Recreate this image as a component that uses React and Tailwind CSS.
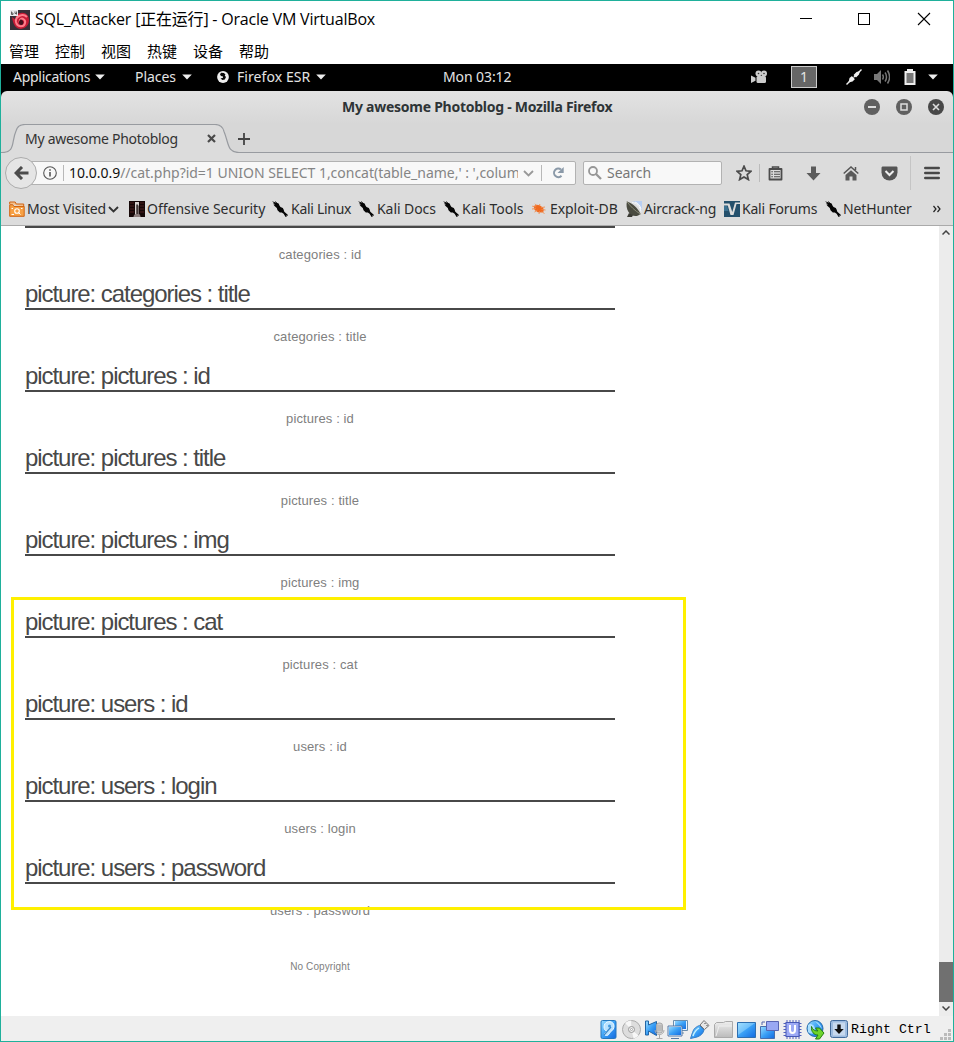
import React from "react";

const UI = "font-['Noto_Sans'] whitespace-nowrap";

function Caret({ className = "" }) {
  return <svg className={"shrink-0 " + className} width="10" height="6" viewBox="0 0 10 6"><path d="M0.2 0.5h9.6L5 5.5z" fill="#eee" /></svg>;
}

function KaliLogo() {
  return (
    <svg width="16" height="16" viewBox="0 0 16 16" fill="#050505">
      <path d="M0 .3l3 1 1.6.4 2 .8 1 2.3.9 1.3 2.3.8.8 1.6.7 2.2 3.7 3.3-.4.7-1.6-.3.8 1.4-1.2.2-2-3.3-1.8-1.2-2-.1L5.5 9.3 4.8 7 2.8 5.3 1.3 3.6 3 4 .8 2l1.7.4z" />
      <path d="M3.3.3l2 2.2" stroke="#050505" strokeWidth=".7" />
    </svg>
  );
}

function FolderLogo() {
  return (
    <svg width="16" height="16" viewBox="0 0 16 16">
      <path d="M.7 3V1h5.500l1 2h7.500v2.500" fill="#f3c08d" stroke="#d06414" />
      <path d="M.7 3.700h3L5 5.500h10.200v9.800H.7z" fill="#f7a145" stroke="#d06414" />
      <circle cx="8" cy="10" r="2.300" fill="none" stroke="#fff" strokeWidth="1.100" />
      <path d="M9.700 11.700l1.800 1.800M2.500 13.500h2.500M2.500 7.500h1.500M12 7.500h1.500" stroke="#fff" />
    </svg>
  );
}

function OffsecLogo() {
  return (
    <svg width="16" height="16" viewBox="0 0 16 16">
      <path fill="#160808" d="M0 0h16v16H0z" />
      <path d="M1 2h4M1 5h4M1 8h4M1 11h4M11 2h4M11 5h4M11 8h4M11 11h4" stroke="#4c1e1e" />
      <path d="M6 1h4v3.500H9.500V15H6z" fill="#d8d2d0" /><path d="M7.400 3.500h1.400V15H7.400z" fill="#1c1010" />
      <path d="M4.500 16c0-1.500.6-2.500 2-3h3.500c1 .5 1.500 1.500 1.500 3z" fill="#8d7f7f" />
    </svg>
  );
}

function BugLogo() {
  return (
    <svg width="16" height="16" viewBox="0 0 16 16">
      <path d="M2.700 5l3-1.300 3 .5 3.500 2.600.6 3.500-2 1.200-4-.3L3.600 9z" fill="#f06a20" />
      <path d="M1.200 5.200l4 .7M4 2.800l2 2M9 3l-1 2M14 6l-4 .6M14.500 9l-4-.5M13.500 12.500l-3-2M8 13l.5-3M3.500 11l3-2M1 8l4-.5" stroke="#f08a4b" strokeWidth=".9" />
    </svg>
  );
}

function AircrackLogo() {
  return (
    <svg width="16" height="16" viewBox="0 0 16 16">
      <path d="M5 0c6 0 11 5 11 12V0z" fill="#b9cff2" />
      <path d="M6 1.500c5 .5 8 4 9 9M9 1c3 1 5.500 4 6 7" fill="none" stroke="#f4f8ff" />
      <path d="M1 .5C6 2 12 7 14.500 13c-3 3-9 3-12-2C.5 8 0 3.500 1 .5z" fill="#4a4b40" />
      <path d="M1 .5C4 5 9 10 14.500 13" stroke="#8a8b78" fill="none" />
      <path d="M3 12l-2 4h5l1-2z" fill="#3a3a33" />
    </svg>
  );
}

function ForumLogo() {
  return (
    <svg width="16" height="16" viewBox="0 0 16 16">
      <path fill="#24506c" d="M0 0h16v16H0z" />
      <path d="M0 2.500h5.500L8.300 11 11 1.500h5V3h-3.500L9.500 14H6.500L3.800 4.500H0z" fill="#dcdcdc" />
      <path d="M0 5h3l1.500 5H0z" fill="#3b7191" />
    </svg>
  );
}

const bookmarks = [
  { w: "w-[120px]", icon: <FolderLogo />, name: "Most Visited", track: "tracking-[-0.12px]", gap: "ml-[2px]", menu: true },
  { w: "w-[143px]", icon: <OffsecLogo />, name: "Offensive Security", track: "tracking-[-0.02px]", gap: "ml-[2px]" },
  { w: "w-[86px]", icon: <KaliLogo />, name: "Kali Linux", track: "tracking-[-0.29px]", gap: "ml-[3px]" },
  { w: "w-[85px]", icon: <KaliLogo />, name: "Kali Docs", track: "tracking-[-0.07px]", gap: "ml-[3px]" },
  { w: "w-[88px]", icon: <KaliLogo />, name: "Kali Tools", track: "tracking-[0.01px]", gap: "ml-[3px]" },
  { w: "w-[95px]", icon: <BugLogo />, name: "Exploit-DB", track: "tracking-[-0.07px]", gap: "ml-[3px]" },
  { w: "w-[98px]", icon: <AircrackLogo />, name: "Aircrack-ng", track: "tracking-[-0.18px]", gap: "ml-[2px]" },
  { w: "w-[101px]", icon: <ForumLogo />, name: "Kali Forums", track: "tracking-[-0.2px]", gap: "ml-[2px]" },
  { w: "w-[107px]", icon: <KaliLogo />, name: "NetHunter", track: "tracking-[-0.14px]", gap: "ml-[2px]" },
];

const pictures = [
  "categories : title", "pictures : id", "pictures : title", "pictures : img",
  "pictures : cat", "users : id", "users : login", "users : password",
];

function Caption({ children }) {
  return <p className="flex h-[58px] w-[590px] items-start justify-center pt-[18px] text-[13px] leading-[18px] tracking-[0.11px] text-[#808080]">{children}</p>;
}

function HostTitle() {
  return (
    <div className="flex h-[39px] shrink-0 items-center bg-white pl-[9px] text-black">
      <svg className="mt-[-2px]" width="20" height="20" viewBox="0 0 20 20">
        <path fill="#382f38" d="M0 0h20v20H0z" />
        <path d="M2 7c1 8 4 12 9 12 5-1 8-4 8-9s-4-8-8-7c-4 0-6 3-5 7" fill="#c51b36" />
        <path d="M17 7c-4-4-12-1-11 5 1 5 8 6 9 1 1-3-3-6-5-3-1 2 0 4 2 3" fill="none" stroke="#ff7d8b" strokeWidth="2" />
        <path d="M10 10c-2 2-1 5 1 5s3-2 2-4c-1-1-2-2-3-1z" fill="#44101e" />
        <path fill="#e9e9ec" d="M0 0h8v6H0z" /><path d="M1.500 1.500v3h1.500v-1.500h-1.500M5 1.500v2h1.500M6.500 1.500v3" stroke="#444" strokeWidth=".8" fill="none" />
      </svg>
      <span className="ml-[5px] mt-[-3px] w-[762px] whitespace-nowrap font-['Open_Sans','Noto_Sans_CJK_SC',sans-serif] text-[16px] tracking-[-0.2px]">SQL_Attacker [正在运行] - Oracle VM VirtualBox</span>
      <svg className="mt-[-4px]" width="150" height="14" viewBox="0 0 150 14" fill="none" stroke="#000" shapeRendering="crispEdges">
        <path d="M3 6.500h12" /><path d="M61.500 1.500h11v11h-11z" /><path d="M121 1l12 12M133 1l-12 12" shapeRendering="auto" strokeWidth="1.100" />
      </svg>
    </div>
  );
}

function GnomeBar() {
  return (
    <div className={UI + " flex h-[28px] shrink-0 items-center bg-black pb-[2px] text-[14px] text-[#e4e4e4]"}>
      <div className="ml-[12px] flex w-[122px] items-center"><span className="mt-[-2px] w-[78px] tracking-[-0.28px]">Applications</span><Caret className="ml-[4px]" /></div>
      <div className="flex w-[82px] items-center"><span className="mt-[-2px] w-[42px] tracking-[-0.05px]">Places</span><Caret className="ml-[5px]" /></div>
      <div className="flex w-[226px] items-center">
        <svg width="12" height="12" viewBox="0 0 12 12"><circle cx="6" cy="6" r="5.900" fill="#eee" /><path d="M4 1.800l3 .2 1.500 1.800-.8.700L9 6 7.800 8.500 5.500 9 3.500 7.500l2.500-.7V5.500L4 5 3 3.500z" fill="#080808" /></svg>
        <span className="ml-[8px] mt-[-2px] w-[75px] tracking-[0.08px]">Firefox ESR</span><Caret className="ml-[4px]" />
      </div>
      <span className="mt-[-2px] w-[308px] tracking-[-0.1px]">Mon 03:12</span>
      <svg width="16" height="14" viewBox="0 0 16 14" fill="#ccc"><circle cx="7.500" cy="3.500" r="3" /><circle cx="13" cy="3.500" r="3" /><rect x="5.500" y="6" width="9.500" height="7" rx="1.500" /><path d="M0 5.500l4.500 2.200v3L0 13z" /><circle cx="7.500" cy="3.500" r=".8" fill="#333" /><circle cx="13" cy="3.500" r=".8" fill="#333" /></svg>
      <span className="ml-[24px] flex h-[22px] w-[26px] items-center justify-center border border-[#ccc] bg-[#666] pb-[2px]">1</span>
      <svg className="ml-[29px]" width="16" height="16" viewBox="0 0 16 16"><path d="M.5 15.500L15.500.5" stroke="#eee" strokeWidth="1.400" /><path d="M2.500 13.500l1-4.500 2.500-2 3 3-2.500 2.500zM7.500 6l3-3 3.500-1-1 3.500-3 3z" fill="#eee" /><path d="M5.500 6l4.500 4.500" stroke="#000" strokeWidth=".8" /></svg>
      <svg className="ml-[12px]" width="16" height="16" viewBox="0 0 16 16" fill="none"><path d="M0 5h3l4-4v14l-4-4H0z" fill="#777" /><path d="M8.500 5.500c1 1.500 1 3.500 0 5M11 3.500c2 2.500 2 6.500 0 9M13.500 1.500c2.600 4 2.600 9 0 13" stroke="#777" strokeWidth="1.500" /></svg>
      <svg className="ml-[14px]" width="12" height="16" viewBox="0 0 12 16"><path d="M3 0h6v2h2.500v14H.5V2H3z" fill="#eee" /><path d="M2.500 4h7v10h-7z" fill="#777" /></svg>
      <Caret className="ml-[12px]" />
    </div>
  );
}

function FirefoxTitle() {
  const disc = "mt-[-1px] flex size-[16px] items-center justify-center rounded-full";
  return (
    <div className={UI + " flex h-[33px] shrink-0 items-center rounded-t-[6px] bg-linear-to-b from-[#e3e3e3] to-[#d7d7d7] text-[14px] font-bold text-[#2e3436]"}>
      <span className="ml-[341px] mt-[-3px] w-[522px] tracking-[-0.26px]">My awesome Photoblog - Mozilla Firefox</span>
      <span className={disc + " bg-[#606060]"}><svg width="16" height="16"><path d="M4 8h8" stroke="#ddd" strokeWidth="2" /></svg></span>
      <span className={disc + " ml-[16px] bg-[#606060]"}><svg width="16" height="16"><path d="M5 5h6v6H5z" fill="none" stroke="#ddd" strokeWidth="1.500" /></svg></span>
      <span className={disc + " ml-[16px] bg-[#484848]"}><svg width="16" height="16"><path d="M5 5l6 6M11 5l-6 6" stroke="#ddd" strokeWidth="1.600" /></svg></span>
    </div>
  );
}

function Tabs() {
  return (
    <div className={UI + " relative flex h-[29px] shrink-0 items-center bg-[#d7d7d7] text-[14px] text-[#333]"}>
      <svg className="absolute left-0 top-0" width="952" height="29" viewBox="0 0 952 29">
        <path d="M0 28.500C15 29 10 18 15 7c1-4 4-7 9-7h190c5 0 8 3 9 7 5 12 3 21.500 15 21.500h714V29H0z" fill="#dcdcdc" />
        <path d="M0 28.500C15 29 10 18 15 7c1-4 4-6.500 9-6.500h190c5 0 8 3 9 7 5 12 3 21 15 21h714" fill="none" stroke="#989ba0" strokeWidth="1.200" />
      </svg>
      <span className="relative ml-[24px] w-[182px] tracking-[-0.28px]">My awesome Photoblog</span>
      <svg className="relative" width="9" height="9" viewBox="0 0 9 9"><path d="M1 1l7 7M8 1L1 8" stroke="#4a4a4a" strokeWidth="2.200" /></svg>
      <svg className="relative ml-[21px]" width="14" height="14"><path d="M1 7h12M7 1v12" stroke="#444" strokeWidth="1.800" /></svg>
    </div>
  );
}

function NavBar() {
  return (
    <div className={UI + " flex h-[40px] shrink-0 items-center bg-[#dcdcdc] text-[14px]"}>
      <div className="z-10 ml-[4px] flex size-[32px] shrink-0 items-center justify-center rounded-full border border-[#acacac] bg-[#e5e5e5]">
        <svg width="15" height="14" viewBox="0 0 15 14"><path d="M8 1L2 7l6 6M2 7h12.500" fill="none" stroke="#4c4c4c" strokeWidth="3" /></svg>
      </div>
      <div className="ml-[-7px] flex h-[24px] w-[546px] shrink-0 items-center rounded-r-[2px] border border-[#b2b2b2] bg-[#f8f8f8] pl-[12px] text-[#858585]">
        <svg className="shrink-0" width="14" height="14" viewBox="0 0 14 14" fill="none" stroke="#555"><circle cx="7" cy="7" r="6.300" strokeWidth="1.100" /><path d="M7 6v4.500M7 3.200v1.500" strokeWidth="1.600" /></svg>
        <span className="ml-[6px] h-[16px] w-px bg-[#b8b8b8]" />
        <span className="ml-[5px] mt-[-2px] w-[449px] shrink-0 overflow-hidden tracking-[-0.02px]"><span className="text-[#111]">10.0.0.9</span>//cat.php?id=1 UNION SELECT 1,concat(table_name,' : ',colum</span>
        <svg className="ml-[5px] shrink-0" width="11" height="7"><path d="M1 1l4.500 4.500L10 1" stroke="#999" strokeWidth="1.800" fill="none" /></svg>
        <span className="ml-[7px] h-[16px] w-px bg-[#b8b8b8]" />
        <svg className="ml-[10px] shrink-0" width="12" height="12" viewBox="0 0 12 12"><path d="M9.500 8.800a4.300 4.300 0 1 1-.5-6.300" stroke="#8a99a8" strokeWidth="2" fill="none" /><path d="M11.700 0v6H5.500z" fill="#8a99a8" /></svg>
      </div>
      <div className="ml-[7px] flex h-[24px] w-[139px] shrink-0 items-center rounded-[2px] border border-[#b2b2b2] bg-[#f8f8f8] pl-[4px] text-[#777]">
        <svg width="14" height="14" viewBox="0 0 14 14"><circle cx="5" cy="5" r="4" stroke="#979797" strokeWidth="1.800" fill="none" /><path d="M8 8l5 5" stroke="#979797" strokeWidth="2.300" /></svg>
        <span className="ml-[5px] mt-[-2px] tracking-[-0.05px]">Search</span>
      </div>
      <svg className="ml-[14px] shrink-0" width="16" height="16" viewBox="0 0 16 16"><path d="M8 1.200l2 4.600 5 .5-3.800 3.300 1.200 5L8 12l-4.400 2.600 1.200-5L1 6.300l5-.5z" fill="none" stroke="#4c4c4c" strokeWidth="1.700" /></svg>
      <span className="ml-[7px] h-[18px] w-px bg-[#bbb]" />
      <svg className="ml-[8px] shrink-0" width="15" height="15" viewBox="0 0 15 15"><path d="M1.500 3h12v10.500h-12z" fill="none" stroke="#4c4c4c" strokeWidth="1.800" strokeLinejoin="round" /><path d="M4.500 3V1h6v2" fill="none" stroke="#4c4c4c" strokeWidth="1.500" /><path d="M3.300 5.700h1.600M6 5.700h6M3.300 8.200h1.600M6 8.200h6M3.300 10.700h1.600M6 10.700h6" stroke="#4c4c4c" strokeWidth="1.100" /></svg>
      <svg className="ml-[23px] shrink-0" width="15" height="15"><path d="M5 .5h5v6.500h4.500l-7 7.500-7-7.500H5z" fill="#5b5b5b" /></svg>
      <svg className="ml-[22px] shrink-0" width="16" height="15" viewBox="0 0 16 15"><path d="M.7 7.500L8 1l7.300 6.500M12.500 1v3" fill="none" stroke="#555" strokeWidth="1.500" /><path d="M2.500 9L8 4.200 13.500 9v5.500H9.500v-4h-3v4h-4z" fill="#5b5b5b" /></svg>
      <svg className="ml-[22px] shrink-0" width="17" height="15" viewBox="0 0 17 15"><path d="M2 .5h13c1 0 1.500.5 1.500 1.500v4.500a8 8 0 0 1-16 0V2C.5 1 1 .5 2 .5z" fill="#555" /><path d="M4.500 5l4 4 4-4" stroke="#eee" strokeWidth="2" fill="none" /></svg>
      <span className="ml-[12px] h-[34px] w-px bg-[#c5c5c5]" />
      <svg className="ml-[13px] shrink-0" width="16" height="14"><path d="M1.300 2h13.400M1.300 7h13.400M1.300 12h13.400" stroke="#484848" strokeWidth="2.600" strokeLinecap="round" /></svg>
    </div>
  );
}

function Bookmarks() {
  return (
    <div className={UI + " flex h-[33px] shrink-0 items-center border-b border-[#aaa] bg-[#dcdcdc] pl-[8px] text-[14px] text-[#2d2d2d]"}>
      {bookmarks.map((b) => (
        <div key={b.name} className={"flex shrink-0 items-center " + b.w}>
          {b.icon}<span className={"mt-[-2px] " + b.gap + " " + b.track}>{b.name}</span>
          {b.menu && <svg className="ml-[2px] shrink-0" width="11" height="7"><path d="M1 1l4.500 4.500L10 1" stroke="#333" strokeWidth="1.900" fill="none" /></svg>}
        </div>
      ))}
      <svg className="ml-px" width="8" height="8"><path d="M.5 1L3 4 .5 7M4.500 1L7 4 4.500 7" stroke="#222" strokeWidth="1.200" fill="none" /></svg>
    </div>
  );
}

function Page() {
  return (
    <div className="relative flex h-[790px] shrink-0 bg-white font-['Liberation_Sans',Arial,sans-serif]">
      <main className="w-[938px] pl-[24px]">
        <div className="h-[2px] w-[590px] bg-[#484848]" />
        <Caption>categories : id</Caption>
        {pictures.map((p) => (
          <section key={p}>
            <h2 className="h-[24px] w-[590px] whitespace-nowrap border-b-2 border-[#484848] text-[24px] leading-[16px] tracking-[-1.06px] text-[#484848]">picture: {p}</h2>
            <Caption>{p}</Caption>
          </section>
        ))}
        <p className="w-[590px] pt-[19px] text-center text-[10px] leading-[12px] tracking-[0.1px] text-[#808080]">No Copyright</p>
      </main>
      <div className="absolute left-[10px] top-[371px] h-[313px] w-[675px] border-3 border-[#fff000]" />
      <aside className="flex w-[14px] flex-col items-center bg-[#ececec] pt-[4px]">
        <svg width="8" height="5"><path d="M.5 4.500L4 1l3.500 3.500" stroke="#444" strokeWidth="1.500" fill="none" /></svg>
        <div className="mt-[727px] h-[40px] w-full bg-[#707070]" />
        <svg className="mt-[4px]" width="8" height="5"><path d="M.5.5L4 4 7.500.5" stroke="#444" strokeWidth="1.500" fill="none" /></svg>
      </aside>
    </div>
  );
}

function StatusBar() {
  return (
    <div className="flex h-[25px] shrink-0 items-center bg-[#efefef] pl-[598px]">
      <svg className="mt-px shrink-0" width="252" height="23" viewBox="0 0 252 23">
        <defs>
          <linearGradient id="blue" x2="1" y2="1"><stop stopColor="#9cddff" /><stop offset=".5" stopColor="#3aa0f6" /><stop offset="1" stopColor="#1268df" /></linearGradient>
          <linearGradient id="grey" x2="0" y2="1"><stop stopColor="#eee" /><stop offset="1" stopColor="#bbb" /></linearGradient>
        </defs>
        <g><rect x="2" y="2.500" width="15" height="18" rx="1.500" fill="url(#blue)" stroke="#2477bd" /><path d="M5 9c0-7 10-7 10-1 0 5-4 5-5 8-1 2-4 2-5 0l3-3c-2 0-3-2-3-4z" fill="#b9e2ff" stroke="#eefaff" /><circle cx="10.500" cy="8" r="1.500" fill="#4499dd" /><path d="M5 17l7-8" stroke="#3a86c8" strokeWidth="1.200" /></g>
        <g><circle cx="32.500" cy="11.500" r="9" fill="#ddd" stroke="#aaa" /><path d="M32.500 11.500L26 5a9 9 0 0 1 6-2.500zM32.500 11.500l7 6a9 9 0 0 1-5 3z" fill="#f7f7f7" /><circle cx="32.500" cy="11.500" r="3" fill="#eee" stroke="#999" /><circle cx="32.500" cy="11.500" r="1" fill="#fff" stroke="#aaa" /></g>
        <g><path d="M46.500 3h3v4l8-3.500v14L49.500 13v4h-3z" fill="url(#blue)" stroke="#2365a5" /><rect x="57.500" y="5" width="6" height="10" rx="2.500" fill="#ccc" stroke="#aaa" /><path d="M57 8h7M57 10h7M57 12h7" stroke="#aaa" /><path d="M56 12c0 6 9 6 9 0M60.500 16.500v3.500M57.500 20.500h6" fill="none" stroke="#aaa" /></g>
        <g stroke="#e9f4ff"><path d="M75.500 2.500h12v9h-12z" fill="url(#blue)" /><path d="M74.500 2.500h14v10h-14zM79 15h6" fill="none" stroke="#6b8dab" /><path d="M69.500 8.500h13v9h-13z" fill="url(#blue)" /><path d="M69 8h14v10H69zM72 20.500h8" fill="none" stroke="#5678a5" /></g>
        <g><path d="M91.500 20.500l2-6c1-4 4-6 7-7l4.500 4.500c-1 4-4 6-7 7z" fill="url(#blue)" stroke="#367fc7" /><path d="M101 7l4-4.500 5 5-4.500 4z" fill="#e6e6e6" stroke="#777" /><path d="M94 18c1-4 3-6 6-8" stroke="#c5f1ff" strokeWidth="1.500" fill="none" /><path d="M105.500 5l1 1M107.500 7l1 1" stroke="#444" /></g>
        <g><path d="M115.500 6.500l2-2h7l2-1h7v16h-18z" fill="url(#grey)" stroke="#aaa" /><path d="M117 18l3-10h13" fill="none" stroke="#eee" /></g>
        <g><path d="M138.500 4.500h18v15h-18z" fill="url(#blue)" stroke="#2e6fb0" /><path d="M139 5h17L139 17z" fill="#a8e2ff" opacity=".45" /></g>
        <g><path d="M161.500 8.500h14v12h-14z" fill="url(#blue)" stroke="#476fac" /><path d="M167.500 3.500h12v9h-12z" fill="#99a8f3" stroke="#5965b2" /><path d="M163 4v3M166 4h-3" stroke="#56a" /></g>
        <g transform="translate(1.500 0)"><path d="M186.500 2v19M189.500 2v19M192.500 2v19M195.500 2v19M198.500 2v19M183 5.500h18M183 8.500h18M183 11.500h18M183 14.500h18M183 17.500h18" stroke="#5363bd" /><rect x="185.500" y="4.500" width="13" height="14" fill="#9daaf5" stroke="#4658b5" /><path d="M189.500 7v5c0 4 5 4 5 0V7" fill="none" stroke="#fff" strokeWidth="2" /></g>
        <g><circle cx="216" cy="10.500" r="8" fill="url(#blue)" stroke="#286ba9" /><path d="M209 7c4-3 8 2 7 6s-5 3-7 1zM216 3c4 2 6 4 7 8" fill="#bfeaff" opacity=".8" /><path d="M212.500 8.500c1 3 3 4.500 6.500 4.500l-2.500-3h4l4.500 5-4.500 6h-4l2.500-4c-4 0-7-3-6.500-8.500z" fill="#6ed42c" stroke="#268010" /></g>
        <g><rect x="231.500" y="2.500" width="17" height="17" rx="2" fill="#9dbce0" stroke="#426b9c" /><path d="M234 4.500h12v13h-12z" fill="#d9e5f4" opacity=".7" /><path d="M238.300 6.500h3.400v4.500h3l-4.700 5-4.700-5h3z" fill="#111" /></g>
      </svg>
      <span className="mt-[2px] whitespace-nowrap font-['Liberation_Mono',monospace] text-[13.300px] leading-[20px] text-black">Right Ctrl</span>
      <svg className="ml-[9px] mt-[11px] shrink-0" width="11" height="11" fill="#bbb"><path d="M8 0h3v3H8zM4 4h3v3H4zM8 4h3v3H8zM0 8h3v3H0zM4 8h3v3H4zM8 8h3v3H8z" /></svg>
    </div>
  );
}

export default function App() {
  return (
    <div className="flex h-[1042px] w-[954px] flex-col overflow-hidden border border-[#1fb09b] bg-white">
      <HostTitle />
      <nav className="flex h-[24px] shrink-0 gap-[16px] bg-white pl-[8px] font-['Noto_Sans_CJK_SC',sans-serif] text-[15px] leading-[22px] text-black">
        {["管理", "控制", "视图", "热键", "设备", "帮助"].map((m) => <span key={m}>{m}</span>)}
      </nav>
      <div className="flex shrink-0 flex-col bg-black"><GnomeBar /><div className="mt-[-1px]"><FirefoxTitle /></div></div>
      <Tabs />
      <NavBar />
      <Bookmarks />
      <Page />
      <StatusBar />
    </div>
  );
}
